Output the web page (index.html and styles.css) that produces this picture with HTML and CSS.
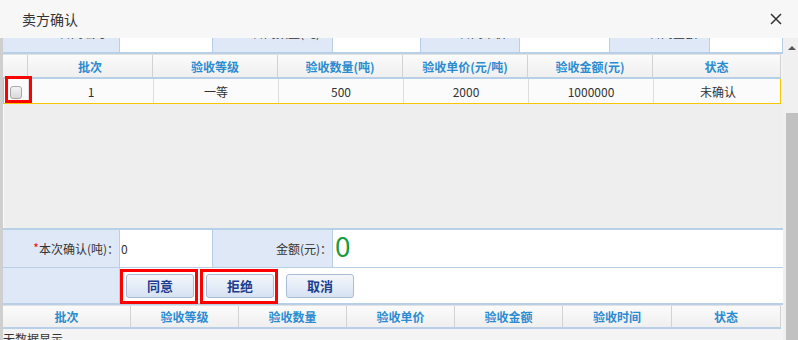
FILE: index.html
```html
<!DOCTYPE html>
<html lang="zh-CN">
<head>
    <meta charset="UTF-8">
    <title>卖方确认</title>
    <link rel="stylesheet" href="styles.css">
</head>
<body>
<div class="dialog">
    <div class="dialog-title">
        <span>卖方确认</span>
        <svg class="close" viewBox="0 0 12 12"><path d="M1 1L11 11M11 1L1 11" stroke="#333" stroke-width="1.5" fill="none"/></svg>
    </div>
    <div class="dialog-body">
        <div class="content">
            <!-- ligne d'info (défilée, presque cachée) -->
            <div class="info-row">
                <div class="label">合同编号：</div><div class="value">1</div>
                <div class="label">合同数量(吨)：</div><div class="value">1</div>
                <div class="label">合同单价：</div><div class="value">1</div>
                <div class="label">合同金额：</div><div class="value">1</div>
            </div>

            <div class="grid grid-top">
                <div class="grid-head">
                    <div></div>
                    <div>批次</div>
                    <div>验收等级</div>
                    <div>验收数量(吨)</div>
                    <div>验收单价(元/吨)</div>
                    <div>验收金额(元)</div>
                    <div>状态</div>
                </div>
                <div class="grid-row selected">
                    <div class="check-cell"><span class="checkbox"></span><span class="mark"></span></div>
                    <div>1</div>
                    <div>一等</div>
                    <div>500</div>
                    <div>2000</div>
                    <div>1000000</div>
                    <div>未确认</div>
                </div>
            </div>
            <div class="grid-empty"></div>

            <div class="form">
                <div class="form-row">
                    <div class="label"><span class="req">*</span>本次确认(吨)：</div>
                    <div class="value">0</div>
                    <div class="label">金额(元)：</div>
                    <div class="value"><span class="amount">0</span></div>
                </div>
                <div class="form-row buttons-row">
                    <div class="label"></div>
                    <div class="buttons">
                        <button class="btn">同意<span class="mark"></span></button>
                        <button class="btn">拒绝<span class="mark"></span></button>
                        <button class="btn">取消</button>
                    </div>
                </div>
            </div>

            <div class="grid grid-bottom">
                <div class="grid-head">
                    <div>批次</div>
                    <div>验收等级</div>
                    <div>验收数量</div>
                    <div>验收单价</div>
                    <div>验收金额</div>
                    <div>验收时间</div>
                    <div>状态</div>
                </div>
            </div>
            <div class="no-data">无数据显示</div>
        </div>
        <div class="scrollbar">
            <span class="arrow-up"></span>
            <div class="thumb"></div>
        </div>
    </div>
</div>
</body>
</html>
```

FILE: styles.css
```css
* {
    box-sizing: border-box;
}
body {
    margin: 0;
    background: #fff;
    font-family: "Noto Sans CJK SC", "Microsoft YaHei", sans-serif;
    font-size: 12px;
    color: #333;
}
.dialog {
    width: 798px;
    height: 340px;
    overflow: hidden;
    display: flex;
    flex-direction: column;
    background: #f6f6f6;
}
.dialog-title {
    height: 38px;
    flex: none;
    display: flex;
    align-items: center;
    justify-content: space-between;
    padding: 0 16px 0 22px;
    font-size: 14px;
    color: #333;
    background: #f7f7f7;
    position: relative;
    z-index: 1;
}
.close {
    width: 12px;
    height: 12px;
}
.dialog-body {
    flex: 1;
    display: flex;
    min-height: 0;
}
.content {
    width: 783px;
    flex: none;
    border-left: 3px solid #cfcfcf;
    overflow: hidden;
    background: #f4f4f4;
}
.scrollbar {
    flex: 1;
    background: #f0f0f0;
    display: flex;
    flex-direction: column;
    align-items: flex-end;
}
.arrow-up {
    width: 0;
    height: 0;
    border-left: 4px solid transparent;
    border-right: 4px solid transparent;
    border-bottom: 4px solid #555;
    margin: 8px 2px 0 0;
}
.thumb {
    margin-top: auto;
    width: 12px;
    height: 227px;
    background: #c1c1c1;
}

/* ligne d'info */
.info-row {
    display: grid;
    grid-template-columns: 117px 93px 120px 88px 99px 90px 100px 73px;
    height: 36px;
    margin-top: -20px;
    border-bottom: 2px solid #b8cfe8;
    background: #fff;
    line-height: 30px;
}
.label {
    background: #dfe8f6;
    text-align: right;
    border-right: 1px solid #b8cfe8;
}
.info-row .value {
    padding-left: 30px;
    border-right: 1px solid #b8cfe8;
}

/* grilles */
.grid {
    width: 778px;
}
.grid-head,
.grid-row {
    display: grid;
}
.grid-top .grid-head,
.grid-top .grid-row {
    grid-template-columns: 25px repeat(5, 125px) 128px;
}
.grid-bottom .grid-head {
    grid-template-columns: 128px 108px 108px 108px 108px 109px 109px;
}
.grid-head {
    height: 25px;
    border-top: 1px solid #e2e2e2;
    border-bottom: 2px solid #b8cfe8;
    background: linear-gradient(#fbfbfb, #efefef);
    color: #2a8bd0;
    font-weight: bold;
}
.grid-bottom .grid-head {
    height: 24px;
}
.grid-head div,
.grid-row div {
    border-right: 1px solid #d2d2d2;
    display: flex;
    align-items: center;
    justify-content: center;
}
.grid-row {
    height: 25px;
    background: #fbfbfb;
}
.grid-row.selected {
    border: 1px solid #f8c600;
    border-top: none;
}
.grid-row div {
    border-right-color: #dddddd;
}
.grid-row div:last-child {
    border-right: none;
}
.check-cell {
    position: relative;
}
.checkbox {
    width: 12px;
    height: 13px;
    border: 1px solid #a8a8a8;
    border-radius: 3px;
    background: linear-gradient(#f4f4f4, #d8d8d8);
    margin-top: 2px;
}
.mark {
    position: absolute;
    inset: -6px -5px -7px -7px;
    border: 3px solid #f00;
    pointer-events: none;
}
.check-cell .mark {
    inset: -3px -4px 0 1px;
}
.grid-empty {
    height: 124px;
    background: #eeeeee;
    border-left: 1px solid #fafafa;
    border-bottom-left-radius: 3px;
}

/* formulaire */
.form {
    border-top: 2px solid #b8cfe8;
    border-bottom: 2px solid #b8cfe8;
    background: #fff;
}
.form-row {
    display: grid;
    grid-template-columns: 117px 93px 120px 1fr;
    height: 37px;
    align-items: stretch;
}
.form-row .label,
.form-row .value {
    display: flex;
    align-items: center;
}
.form-row .label {
    justify-content: flex-end;
}
.form-row .value {
    padding-left: 1px;
    border-right: 1px solid #b8cfe8;
}
.form-row .value:last-child {
    border-right: none;
    padding-left: 2px;
}
.req {
    color: #f00;
    position: relative;
    top: -1px;
}
.amount {
    font-family: "Noto Sans", sans-serif;
    font-size: 27px;
    line-height: 1;
    color: #1a9b3c;
    margin-top: -4px;
}
.buttons-row {
    grid-template-columns: 117px 1fr;
    height: 36px;
    border-top: 1px solid #b8cfe8;
}
.buttons {
    display: flex;
    align-items: center;
    gap: 12px;
    padding-left: 6px;
}
.btn {
    position: relative;
    width: 68px;
    height: 24px;
    padding: 0;
    border: 1px solid #a9bcd6;
    border-radius: 3px;
    background: linear-gradient(#f4f7fc, #d6e2f3);
    color: #1d3c8f;
    font-family: inherit;
    font-weight: bold;
    font-size: 13px;
}
.no-data {
    padding: 2px 0 0 0;
    line-height: 16px;
    color: #333;
}
```
